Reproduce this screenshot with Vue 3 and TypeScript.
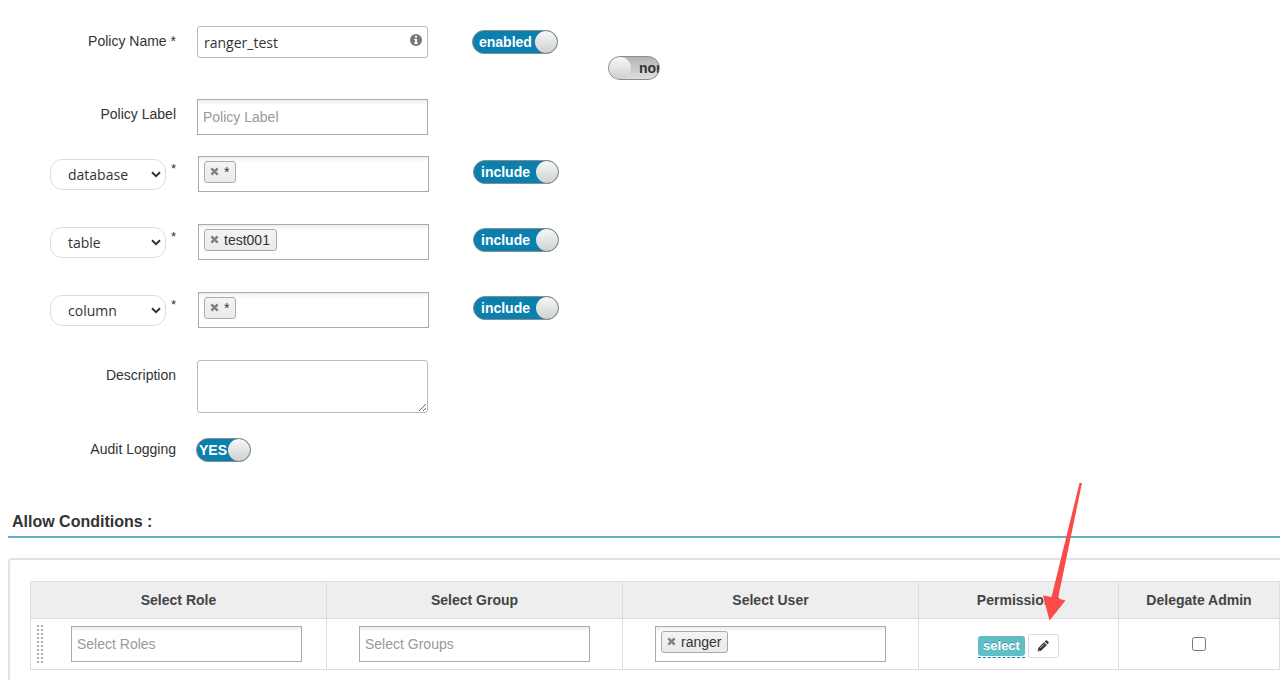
<script setup lang="ts">
import { ref } from 'vue'

interface Resource {
  level: string
  options: string[]
  values: string[]
  include: boolean
}

const policyName = ref('ranger_test')
const description = ref('')
const enabled = ref(true)
const override = ref(false)
const audit = ref(true)
const delegateAdmin = ref(false)
const users = ref(['ranger'])

const resources = ref<Resource[]>([
  { level: 'database', options: ['database', 'url'], values: ['*'], include: true },
  { level: 'table', options: ['table', 'udf'], values: ['test001'], include: true },
  { level: 'column', options: ['column', 'none'], values: ['*'], include: true },
])

function drop(list: string[], value: string) {
  const at = list.indexOf(value)
  if (at >= 0) list.splice(at, 1)
}
</script>

<template>
  <main class="page">
    <form class="form" @submit.prevent>
      <div class="row row-name">
        <label class="label" for="policy-name">Policy Name *</label>
        <div class="text-field">
          <input id="policy-name" v-model="policyName" type="text" />
          <svg class="info" viewBox="0 0 12 12" aria-hidden="true">
            <circle cx="6" cy="6" r="6" />
            <path d="M5 1.8h2v1.8H5zM4.2 4.7H7v3.9h.8v1.3H4.2V8.6H5V6h-.8z" fill="#fff" />
          </svg>
        </div>
        <div class="switches">
          <button type="button" class="switch wide" role="switch" :aria-checked="enabled" @click="enabled = !enabled">
            <span class="switch-text">enabled</span><span class="knob"></span>
          </button>
          <button type="button" class="switch off" role="switch" :aria-checked="override" @click="override = !override">
            <span class="knob"></span><span class="switch-text">normal</span>
          </button>
        </div>
      </div>

      <div class="row row-label">
        <label class="label" for="policy-label">Policy Label</label>
        <input id="policy-label" class="tag-box tag-input" type="text" placeholder="Policy Label" />
      </div>

      <div v-for="res in resources" :key="res.level" class="row row-resource">
        <div class="level">
          <div class="select-wrap">
            <select v-model="res.level" aria-label="Resource level">
              <option v-for="opt in res.options" :key="opt">{{ opt }}</option>
            </select>
            <svg class="chevron" viewBox="0 0 10 7" aria-hidden="true"><path d="M1 1.2l4 4 4-4" /></svg>
          </div>
          <span class="star">*</span>
        </div>
        <div class="tag-box">
          <span v-for="value in res.values" :key="value" class="tag">
            <button type="button" class="remove" :aria-label="'Remove ' + value" @click="drop(res.values, value)">
              <svg viewBox="0 0 8 8"><path d="M1.2 1.2l5.6 5.6M6.8 1.2L1.2 6.8" /></svg>
            </button>
            {{ value }}
          </span>
        </div>
        <button type="button" class="switch wide include" role="switch" :aria-checked="res.include" @click="res.include = !res.include">
          <span class="switch-text">include</span><span class="knob"></span>
        </button>
      </div>

      <div class="row row-description">
        <label class="label" for="description">Description</label>
        <textarea id="description" v-model="description"></textarea>
      </div>

      <div class="row row-audit">
        <span id="audit-label" class="label">Audit Logging</span>
        <button type="button" class="switch yes" role="switch" aria-labelledby="audit-label" :aria-checked="audit" @click="audit = !audit">
          <span class="switch-text">YES</span><span class="knob"></span>
        </button>
      </div>
    </form>

    <section class="conditions">
      <h2>Allow Conditions :</h2>
      <div class="panel">
        <table>
          <colgroup>
            <col /><col /><col /><col class="col-permission" /><col class="col-admin" />
          </colgroup>
          <thead>
            <tr>
              <th>Select Role</th>
              <th>Select Group</th>
              <th>Select User</th>
              <th>Permissions</th>
              <th>Delegate Admin</th>
            </tr>
          </thead>
          <tbody>
            <tr>
              <td>
                <div class="role-cell">
                  <span class="handle"></span>
                  <input class="tag-box tag-input" type="text" placeholder="Select Roles" aria-label="Select Roles" />
                </div>
              </td>
              <td>
                <div class="cell">
                  <input class="tag-box tag-input" type="text" placeholder="Select Groups" aria-label="Select Groups" />
                </div>
              </td>
              <td>
                <div class="cell">
                  <div class="tag-box">
                    <span v-for="user in users" :key="user" class="tag">
                      <button type="button" class="remove" :aria-label="'Remove ' + user" @click="drop(users, user)">
                        <svg viewBox="0 0 8 8"><path d="M1.2 1.2l5.6 5.6M6.8 1.2L1.2 6.8" /></svg>
                      </button>
                      {{ user }}
                    </span>
                  </div>
                </div>
              </td>
              <td>
                <div class="cell permission">
                  <a href="#" class="permission-link" @click.prevent><span class="badge">select</span></a>
                  <button type="button" class="edit" aria-label="Edit permissions">
                    <svg viewBox="0 0 12 12" aria-hidden="true">
                      <path d="M.6 11.4l.7-3.5L7 2.2l2.8 2.8-5.7 5.7z" />
                      <path d="M7.7 1.5L8.7.5q.6-.5 1.2 0l1.6 1.6q.5.6 0 1.2l-1 1z" />
                      <path d="M1.3 9.7l1 1M3.3 8l3.8-3.8" class="pencil-line" />
                    </svg>
                  </button>
                </div>
              </td>
              <td>
                <div class="cell">
                  <input v-model="delegateAdmin" class="check" type="checkbox" aria-label="Delegate Admin" />
                </div>
              </td>
            </tr>
          </tbody>
        </table>
      </div>
      <svg class="arrow" viewBox="0 0 40 138" aria-hidden="true">
        <path d="M36.5 0H39L15 115.5L22.5 117.5L6.5 137.5L0 112.5L8.5 114z" />
      </svg>
    </section>
  </main>
</template>

<style>
body {
  margin: 0;
  background: #fff;
}
</style>

<style scoped>
.page {
  overflow: hidden;
  color: #333;
  font: 14px/20px "Liberation Sans", Arial, sans-serif;
}
.page * {
  box-sizing: border-box;
}
button,
input,
select,
textarea {
  margin: 0;
  font: inherit;
  color: inherit;
}
.form {
  padding-top: 26px;
}
.row {
  display: grid;
  grid-template-columns: 176px 231px auto;
  column-gap: 21px;
  align-items: start;
  justify-content: start;
}
.label {
  padding-top: 5px;
  text-align: right;
}
.row-name {
  margin-bottom: 19px;
}
.row-label {
  margin-bottom: 21px;
}
.row-resource {
  column-gap: 22px;
  margin-bottom: 32px;
}
.row-description {
  margin-bottom: 25px;
}
.row-audit {
  column-gap: 20px;
}
.row-audit .label {
  padding-top: 1px;
}

.text-field {
  position: relative;
}
.text-field input {
  display: block;
  width: 100%;
  height: 32px;
  padding: 0 24px 0 6px;
  border: 1px solid #bbb;
  border-radius: 3px;
  font-family: "Open Sans", "Noto Sans", sans-serif;
}
.info {
  position: absolute;
  top: 8px;
  right: 6px;
  width: 12px;
  height: 12px;
  fill: #777;
}

.switches {
  display: flex;
  gap: 50px;
  margin: 4px 0 0 23px;
}
.switch {
  display: flex;
  align-items: center;
  justify-content: space-between;
  width: 55px;
  height: 24px;
  padding: 0;
  overflow: hidden;
  border: 1px solid #8c8c8c;
  border-radius: 12px;
  background: #0b7fad;
  color: #fff;
  font-weight: bold;
}
.wide {
  width: 86px;
  padding-left: 6px;
}
.include {
  margin: 4px 0 0 22px;
}
.include .switch-text {
  padding-left: 1px;
}
.yes {
  padding-left: 2px;
}
.knob {
  flex: none;
  width: 22px;
  height: 22px;
  border-radius: 50%;
  background: linear-gradient(#f8f8f8, #d0d0d0);
}
.off {
  width: 52px;
  margin-top: 26px;
  justify-content: flex-start;
  gap: 8px;
  background: linear-gradient(#b4b4b4, #dedede);
  color: #333;
}

.tag-box {
  display: flex;
  align-items: flex-start;
  width: 231px;
  height: 36px;
  padding: 4px 5px;
  border: 1px solid #aaa;
  background: linear-gradient(#eee 1%, #fff 15%);
}
.tag-input {
  display: block;
}
.tag-input::placeholder {
  color: #999;
  opacity: 1;
}
.tag {
  display: flex;
  align-items: center;
  gap: 5px;
  height: 22px;
  padding: 0 6px 1px 5px;
  border: 1px solid #aaa;
  border-radius: 3px;
  background: linear-gradient(#f4f4f4, #eaeaea);
}
.remove {
  display: flex;
  padding: 0;
  border: 0;
  background: none;
}
.remove svg {
  width: 9px;
  height: 9px;
  fill: none;
  stroke: #808080;
  stroke-width: 2.2;
}

.level {
  display: flex;
  justify-content: flex-end;
  gap: 5px;
  padding-top: 3px;
}
.star {
  width: 5px;
  font-size: 13px;
}
.select-wrap {
  position: relative;
  width: 116px;
}
.select-wrap select {
  width: 100%;
  height: 31px;
  padding: 0 24px 0 17px;
  appearance: none;
  border: 1px solid #ddd;
  border-radius: 12px;
  background: #fff;
  font-family: "Open Sans", "Noto Sans", sans-serif;
}
.chevron {
  position: absolute;
  top: 12px;
  right: 5px;
  width: 10px;
  height: 7px;
  fill: none;
  stroke: #333;
  stroke-width: 2;
}

textarea {
  display: block;
  width: 100%;
  height: 53px;
  border: 1px solid #bbb;
  border-radius: 3px;
}

.conditions {
  position: relative;
  padding: 49px 0 0 8px;
}
h2 {
  margin: 0;
  padding: 0 4px 4px;
  border-bottom: 2px solid #62aecb;
  font-size: 16px;
  line-height: 21px;
}
.panel {
  margin-top: 20px;
  padding: 21px 0 12px 20px;
  border: solid #e3e3e3;
  border-width: 2px 0 0 2px;
  border-radius: 4px 0 0 0;
}
table {
  width: 100%;
  table-layout: fixed;
  border-collapse: collapse;
}
.col-permission {
  width: 200px;
}
.col-admin {
  width: 161px;
}
th,
td {
  padding: 0;
  border: 1px solid #ddd;
}
th {
  height: 37px;
  background: #eee;
  color: #444;
}
td {
  height: 51px;
}
.cell {
  display: flex;
  align-items: center;
  justify-content: center;
}
.role-cell {
  display: flex;
  align-items: center;
  gap: 27px;
  padding-left: 5px;
}
.handle {
  width: 8px;
  height: 40px;
  background: radial-gradient(circle, #aaa 1px, transparent 1px) 0 0 / 4px 4px;
}
.permission {
  align-items: flex-end;
  gap: 3px;
  padding-top: 4px;
}
.permission-link {
  padding-bottom: 1px;
  border-bottom: 1px dashed #08c;
  text-decoration: none;
}
.badge {
  display: block;
  height: 20px;
  padding: 0 5px;
  border-radius: 3px;
  background: #60bfc6;
  color: #fff;
  font-size: 13px;
  font-weight: bold;
  line-height: 20px;
  text-shadow: 0 -1px 0 rgba(0, 0, 0, 0.25);
}
.edit {
  display: flex;
  align-items: center;
  justify-content: center;
  width: 31px;
  height: 24px;
  padding: 0;
  border: 1px solid #ddd;
  border-radius: 2px;
  background: #fff;
}
.edit svg {
  width: 12px;
  height: 12px;
  fill: #333;
}
.pencil-line {
  stroke: #fff;
  stroke-width: 0.7;
}
.check {
  width: 14px;
  height: 14px;
}
.arrow {
  position: absolute;
  top: 21px;
  right: 197px;
  width: 40px;
  height: 138px;
  fill: #fa4b48;
  pointer-events: none;
}
</style>
